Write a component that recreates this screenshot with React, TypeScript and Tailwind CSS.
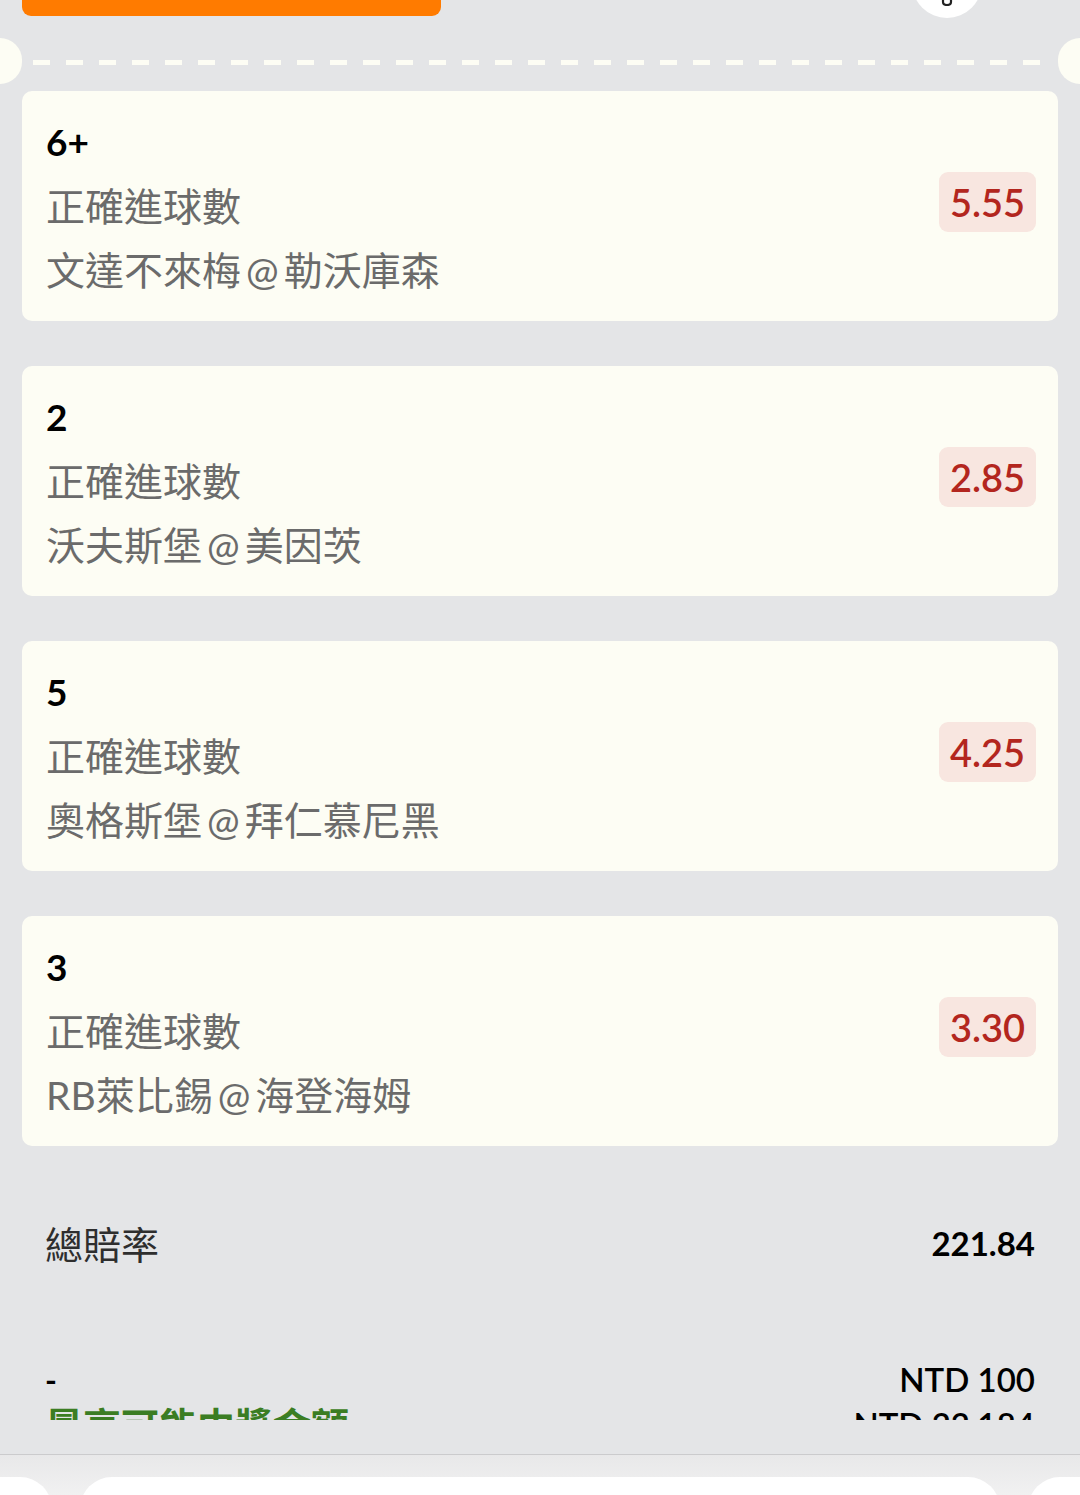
import React from 'react';

const legs = [
  { pick: '6+', market: '正確進球數', home: '文達不來梅', away: '勒沃庫森', odds: '5.55' },
  { pick: '2', market: '正確進球數', home: '沃夫斯堡', away: '美因茨', odds: '2.85' },
  { pick: '5', market: '正確進球數', home: '奧格斯堡', away: '拜仁慕尼黑', odds: '4.25' },
  { pick: '3', market: '正確進球數', home: 'RB萊比錫', away: '海登海姆', odds: '3.30' },
];

const font = "font-['Lato','Noto_Sans_CJK_TC',sans-serif]";

function LegCard({ leg }: { leg: (typeof legs)[number] }) {
  return (
    <div className="flex h-[230px] rounded-[10px] bg-[#fdfdf4] pl-[24px] pr-[22px] py-[19px]">
      <div className="flex-1 flex flex-col">
        <p className="h-[64px] flex items-center text-[37px] font-bold text-black">{leg.pick}</p>
        <p className="h-[64px] flex items-center text-[39px] text-[#6b6b6b]">{leg.market}</p>
        <p className="h-[64px] flex items-center text-[39px] text-[#6b6b6b]">
          {leg.home}
          <span className="mx-[5px]">@</span>
          {leg.away}
        </p>
      </div>
      <div className="mt-[62px] h-[60px] px-[11px] flex items-center rounded-[9px] bg-[#f8e6e0] text-[38px] font-semibold text-[#b3261e]">
        {leg.odds}
      </div>
    </div>
  );
}

export default function App() {
  return (
    <div className={`w-[1080px] h-[1495px] overflow-hidden bg-[#e4e5e7] flex flex-col ${font}`}>
      <div className="h-[1420px] overflow-hidden flex flex-col shrink-0">
        {/* header remains */}
        <div className="h-[18px] flex items-end justify-between pl-[22px] pr-[98px] shrink-0">
          <div className="self-start w-[419px] h-[16px] rounded-b-[9px] bg-[#ff7b00]" />
          <div className="w-[70px] h-[70px] rounded-full bg-white flex items-end justify-center pb-[12px] shrink-0">
            <svg width="12" height="10" viewBox="0 0 12 10" fill="none" stroke="#222" strokeWidth="2.2">
              <path d="M2 0 L2 6 Q2 9 6 9 Q10 9 10 6 L10 0" />
            </svg>
          </div>
        </div>

        {/* ticket separator */}
        <div className="mt-[20px] h-[46px] flex items-center shrink-0">
          <div className="w-[22px] h-[46px] rounded-r-full bg-[#fdfdf4]" />
          <div className="flex-1 mx-[11px] mt-[3px] h-[5px] bg-[repeating-linear-gradient(90deg,#fdfdf4_0_17px,transparent_17px_33px)]" />
          <div className="w-[22px] h-[46px] rounded-l-full bg-[#fdfdf4]" />
        </div>

        <div className="mt-[7px] px-[22px] flex flex-col gap-[45px] shrink-0">
          {legs.map((leg) => (
            <LegCard key={leg.home} leg={leg} />
          ))}
        </div>

        <div className="mt-[68px] h-[60px] px-[45px] flex items-center justify-between shrink-0">
          <span className="text-[38px] text-[#2e2e2e]">總賠率</span>
          <span className="text-[33px] font-bold text-black">221.84</span>
        </div>

        <div className="mt-[81px] h-[50px] px-[45px] flex items-center justify-between shrink-0">
          <span className="text-[32px] font-bold text-black">-</span>
          <span className="text-[33px] font-semibold text-black">NTD 100</span>
        </div>
        <div className="h-[40px] px-[45px] flex items-center justify-between shrink-0">
          <span className="text-[38px] font-bold text-[#3b7d23]">最高可能中獎金額</span>
          <span className="text-[33px] font-semibold text-black">NTD 22,184</span>
        </div>
      </div>

      <div className="h-[35px] shrink-0 border-b border-[#cbcbcd]" />

      <div className="flex-1 bg-[linear-gradient(180deg,#e8e8e9,#f6f6f6)] pt-[22px] flex gap-[28px]">
        <div className="w-[52px] h-[40px] rounded-tr-[32px] bg-white" />
        <div className="flex-1 h-[40px] rounded-t-[32px] bg-white" />
        <div className="w-[52px] h-[40px] rounded-tl-[32px] bg-white" />
      </div>
    </div>
  );
}
